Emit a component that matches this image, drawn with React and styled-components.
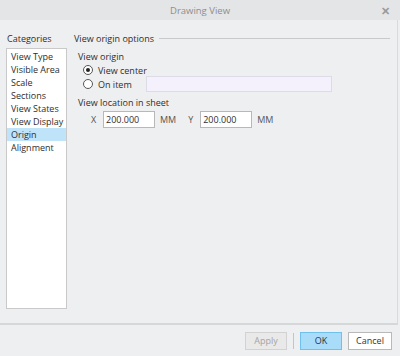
import styled, { createGlobalStyle } from "styled-components";

const Global = createGlobalStyle`
  html, body { margin: 0; padding: 0; }
  body {
    background: #eeeff1;
    font-family: "Open Sans", "Noto Sans", sans-serif;
    font-size: 9px;
    color: #2e2e2e;
  }
`;

const Window = styled.div`
  width: 400px;
  height: 356px;
  display: flex;
  flex-direction: column;
  box-sizing: border-box;
  background: #eeeff1;
`;

const TitleBar = styled.div`
  height: 20px;
  flex: none;
  display: flex;
  align-items: center;
  justify-content: center;
  position: relative;
  background: #e4e5e7;
  color: #8e8e8e;
  font-size: 9.5px;
`;

const Close = styled.span`
  position: absolute;
  right: 10px;
  top: 3px;
  font-size: 11px;
  font-weight: bold;
  color: #9a9a9a;
`;

const Body = styled.div`
  flex: 1;
  display: flex;
  gap: 7px;
  padding: 12px 7px 0 6px;
  border-bottom: 2px solid #d6d7d9;
  border-right: 1px solid #d9dadc;
  margin-right: 2px;
`;

const Side = styled.div`
  width: 61px;
  display: flex;
  flex-direction: column;
  gap: 3px;
`;

const Label = styled.div`
  line-height: 13px;
  padding-left: 1px;
`;

const List = styled.div`
  height: 258px;
  background: #fff;
  border: 1px solid #c9c9c9;
  padding-top: 1px;
`;

const Item = styled.div`
  height: 13px;
  line-height: 13px;
  padding-left: 4px;
  white-space: nowrap;
  background: ${p => (p.active ? "#bfe3f9" : "transparent")};
`;

const Main = styled.div`
  flex: 1;
  display: flex;
  flex-direction: column;
`;

const Header = styled.div`
  display: flex;
  align-items: center;
  gap: 5px;
  line-height: 13px;
  &::after {
    content: "";
    flex: 1;
    height: 1px;
    background: #c8c9cb;
  }
`;

const Group = styled.div`
  display: flex;
  flex-direction: column;
  padding-left: 3px;
  margin-top: ${p => p.top}px;
`;

const RadioRow = styled.label`
  display: flex;
  align-items: center;
  height: 14px;
  padding-left: 6px;
  gap: 5px;
`;

const Radio = styled.span`
  width: 8px;
  height: 8px;
  border-radius: 50%;
  border: 1px solid #555;
  background: #fff;
  display: flex;
  align-items: center;
  justify-content: center;
  &::after {
    content: "";
    width: 4px;
    height: 4px;
    border-radius: 50%;
    background: ${p => (p.checked ? "#222" : "transparent")};
  }
`;

const ItemBox = styled.div`
  width: 184px;
  height: 14px;
  margin-left: 9px;
  background: #f4f1fd;
  border: 1px solid #dcdbe6;
`;

const CoordRow = styled.div`
  display: flex;
  align-items: center;
  gap: 4px;
  padding-left: 14px;
  margin-top: 2px;
`;

const Axis = styled.span`
  width: 8px;
  color: #555;
`;

const Field = styled.div`
  width: 48px;
  height: 15px;
  background: #fff;
  border: 1px solid #b8b8b8;
  padding-left: 2px;
  line-height: 15px;
`;

const Unit = styled.span`
  margin-left: 1px;
  margin-right: 8px;
  color: #555;
`;

const Footer = styled.div`
  height: 31px;
  flex: none;
  display: flex;
  align-items: center;
  justify-content: flex-end;
  padding-right: 8px;
  gap: 6px;
`;

const Button = styled.button`
  width: ${p => p.w || 42}px;
  height: 18px;
  padding: 0;
  font-family: inherit;
  font-size: 9px;
  border: 1px solid ${p => (p.primary ? "#6fc0ec" : p.disabled ? "#d2d2d2" : "#b9b9b9")};
  background: ${p => (p.primary ? "#a9dcf9" : p.disabled ? "#e9e9ea" : "#fff")};
  color: ${p => (p.disabled ? "#a4a4a4" : "#333")};
`;

const Divider = styled.span`
  width: 1px;
  height: 16px;
  background: #c4c4c4;
`;

const categories = ["View Type", "Visible Area", "Scale", "Sections", "View States", "View Display", "Origin", "Alignment"];

export default function App() {
  return (
    <Window>
      <Global />
      <TitleBar>
        Drawing View
        <Close>✕</Close>
      </TitleBar>
      <Body>
        <Side>
          <Label>Categories</Label>
          <List>
            {categories.map(c => (
              <Item key={c} active={c === "Origin"}>{c}</Item>
            ))}
          </List>
        </Side>
        <Main>
          <Header>View origin options</Header>
          <Group top={5}>
            <Label>View origin</Label>
            <RadioRow>
              <Radio checked />
              View center
            </RadioRow>
            <RadioRow>
              <Radio />
              On item
              <ItemBox />
            </RadioRow>
          </Group>
          <Group top={5}>
            <Label>View location in sheet</Label>
            <CoordRow>
              <Axis>X</Axis>
              <Field>200.000</Field>
              <Unit>MM</Unit>
              <Axis>Y</Axis>
              <Field>200.000</Field>
              <Unit>MM</Unit>
            </CoordRow>
          </Group>
        </Main>
      </Body>
      <Footer>
        <Button disabled>Apply</Button>
        <Divider />
        <Button primary>OK</Button>
        <Button w={44}>Cancel</Button>
      </Footer>
    </Window>
  );
}
